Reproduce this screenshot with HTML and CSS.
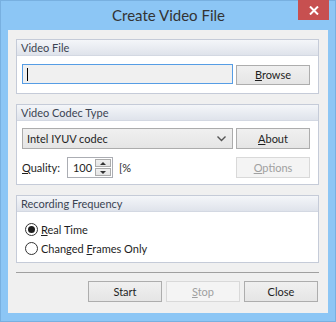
FILE: index.html
```html
<!DOCTYPE html>
<html>
<head>
    <title>Create Video File</title>
    <link rel="stylesheet" href="styles.css">
</head>
<body>
    <div class="window">
        <!-- Title bar with the close control -->
        <div class="titlebar">
            <span class="title">Create Video File</span>
            <button class="close-btn" aria-label="Close">
                <svg width="10" height="9" viewBox="0 0 10 9">
                    <path d="M1 0.5 L9 8.5 M9 0.5 L1 8.5" stroke="#fff" stroke-width="2"/>
                </svg>
            </button>
        </div>

        <div class="client">
            <!-- Video file -->
            <section class="group">
                <div class="group-head">Video File</div>
                <div class="group-body file-row">
                    <div class="edit focused"><span class="caret"></span></div>
                    <button class="btn btn-short"><u>B</u>rowse</button>
                </div>
            </section>

            <!-- Codec -->
            <section class="group">
                <div class="group-head">Video Codec Type</div>
                <div class="group-body codec-body">
                    <div class="codec-row">
                        <div class="combo">
                            <span>Intel IYUV codec</span>
                            <svg width="9" height="6" viewBox="0 0 9 6">
                                <path d="M0.5 0.5 L4.5 4.5 L8.5 0.5" fill="none" stroke="#555" stroke-width="1.4"/>
                            </svg>
                        </div>
                        <button class="btn"><u>A</u>bout</button>
                    </div>
                    <div class="codec-row">
                        <div class="quality">
                            <label><u>Q</u>uality:</label>
                            <div class="spin">
                                <span class="spin-value">100</span>
                                <div class="spin-arrows">
                                    <span class="arrow up"></span>
                                    <span class="arrow down"></span>
                                </div>
                            </div>
                            <span class="unit">[%</span>
                        </div>
                        <button class="btn" disabled><u>O</u>ptions</button>
                    </div>
                </div>
            </section>

            <!-- Recording frequency -->
            <section class="group">
                <div class="group-head">Recording Frequency</div>
                <div class="group-body radio-body">
                    <div class="radio-row"><span class="radio checked"></span><span><u>R</u>eal Time</span></div>
                    <div class="radio-row"><span class="radio"></span><span>Changed <u>F</u>rames Only</span></div>
                </div>
            </section>

            <div class="separator"></div>

            <div class="footer">
                <button class="btn">Start</button>
                <button class="btn" disabled><u>S</u>top</button>
                <button class="btn">Close</button>
            </div>
        </div>
    </div>
</body>
</html>
```

FILE: styles.css
```css
body {
    margin: 0;
    font-family: 'Lato', 'Noto Sans', sans-serif;
    font-size: 11px;
    line-height: 15px;
    color: #1e1e1e;
}

.window {
    box-sizing: border-box;
    width: 336px;
    height: 322px;
    background-color: #8cc6f5;
    border: 1px solid #78b0e0;
    padding: 0 7px 8px 7px;
    display: flex;
    flex-direction: column;
}

.titlebar {
    height: 29px;
    display: grid;
    grid-template-columns: 1fr;
    margin-right: -1px;
}

.title {
    grid-area: 1 / 1;
    justify-self: center;
    align-self: center;
    font-size: 15px;
    color: #333;
    margin-top: -1px;
}

.close-btn {
    grid-area: 1 / 1;
    justify-self: end;
    align-self: start;
    width: 31px;
    height: 20px;
    margin-top: -1px;
    border: none;
    padding: 0;
    background-color: #c75050;
    display: flex;
    align-items: center;
    justify-content: center;
}

.client {
    flex: 1;
    background-color: #f0f0f0;
    padding: 9px 9px 0 8px;
    display: flex;
    flex-direction: column;
}

.group {
    border: 1px solid #c5cbd8;
    background-color: #fff;
    margin-bottom: 10px;
}

.group-head {
    height: 15px;
    line-height: 15px;
    padding-left: 4px;
    border-bottom: 1px solid #d3d8e2;
    background: linear-gradient(#f4f6f9, #dfe3eb);
    color: #3b4452;
}

.group-body {
    padding: 8px 8px 9px 5px;
}

.file-row,
.codec-row {
    display: flex;
    align-items: center;
    justify-content: space-between;
}

.file-row {
    height: 20px;
}

.codec-body {
    padding-top: 7px;
    padding-bottom: 6px;
    display: flex;
    flex-direction: column;
    gap: 8px;
}

.edit {
    box-sizing: border-box;
    width: 211px;
    height: 20px;
    border: 1px solid #abadb3;
    background-color: #f0f0f0;
    display: flex;
    align-items: center;
    padding-left: 4px;
}

.edit.focused {
    border-color: #569de5;
}

.caret {
    width: 1px;
    height: 13px;
    background-color: #000;
}

.btn {
    box-sizing: border-box;
    width: 74px;
    height: 21px;
    padding: 0;
    border: 1px solid #adadad;
    background: linear-gradient(#f0f0f0, #e5e5e5);
    font-family: inherit;
    font-size: 11px;
    color: #1e1e1e;
}

.btn-short {
    height: 20px;
    margin-top: 1px;
}

.btn:disabled {
    border-color: #d9d9d9;
    background: #f4f4f4;
    color: #a0a0a0;
}

.combo {
    box-sizing: border-box;
    width: 211px;
    height: 21px;
    border: 1px solid #acacac;
    background: linear-gradient(#f0f0f0, #e5e5e5);
    display: flex;
    align-items: center;
    justify-content: space-between;
    padding: 0 6px 0 4px;
}

.quality {
    display: flex;
    align-items: center;
}

.quality label {
    margin-right: 7px;
}

.spin {
    box-sizing: border-box;
    width: 46px;
    height: 21px;
    border: 1px solid #abadb3;
    display: flex;
    align-items: center;
    justify-content: space-between;
    padding: 1px 1px 1px 5px;
}

.spin-arrows {
    width: 16px;
    height: 17px;
    display: flex;
    flex-direction: column;
    gap: 1px;
}

.arrow {
    flex: 1;
    border: 1px solid #acacac;
    background: linear-gradient(#f0f0f0, #e5e5e5);
    display: flex;
    align-items: center;
    justify-content: center;
}

.arrow::before {
    content: '';
    border-left: 3px solid transparent;
    border-right: 3px solid transparent;
}

.arrow.up::before {
    border-bottom: 3px solid #333;
}

.arrow.down::before {
    border-top: 3px solid #333;
}

.unit {
    margin-left: 6px;
}

.radio-body {
    padding: 8px 8px 4px 8px;
}

.radio-row {
    height: 19px;
    display: flex;
    align-items: center;
    gap: 3px;
}

.radio {
    box-sizing: border-box;
    width: 13px;
    height: 13px;
    border-radius: 50%;
    border: 1px solid #333;
    background-color: #fff;
    display: flex;
    align-items: center;
    justify-content: center;
}

.radio.checked::before {
    content: '';
    width: 7px;
    height: 7px;
    border-radius: 50%;
    background-color: #1e1e1e;
}

.separator {
    height: 1px;
    background-color: #a0a0a0;
    margin-top: -1px;
}

.footer {
    display: flex;
    justify-content: flex-end;
    gap: 4px;
    margin-top: 8px;
    padding-right: 1px;
}
```
